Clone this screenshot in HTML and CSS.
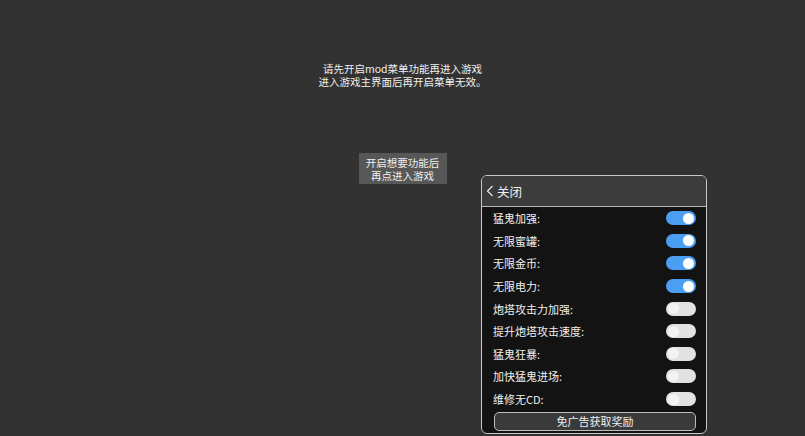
FILE: index.html
```html
<!DOCTYPE html>
<html lang="zh-CN">
<head>
    <meta charset="UTF-8">
    <title>mod菜单</title>
    <link rel="stylesheet" href="styles.css">
</head>
<body>
    <div class="screen">
        <div class="notice">
            <div>请先开启mod菜单功能再进入游戏</div>
            <div>进入游戏主界面后再开启菜单无效。</div>
        </div>

        <div class="enter-btn">
            <div>开启想要功能后</div>
            <div>再点进入游戏</div>
        </div>

        <div class="menu">
            <div class="menu-head">
                <svg class="back" width="8" height="12" viewBox="0 0 8 12">
                    <path d="M6.5 1 L1.5 6 L6.5 11" fill="none" stroke="#e8e8e8" stroke-width="1.2"/>
                </svg>
                <span>关闭</span>
            </div>
            <div class="menu-body">
                <div class="row"><span>猛鬼加强:</span><div class="switch on"></div></div>
                <div class="row"><span>无限蜜罐:</span><div class="switch on"></div></div>
                <div class="row"><span>无限金币:</span><div class="switch on"></div></div>
                <div class="row"><span>无限电力:</span><div class="switch on"></div></div>
                <div class="row"><span>炮塔攻击力加强:</span><div class="switch"></div></div>
                <div class="row"><span>提升炮塔攻击速度:</span><div class="switch"></div></div>
                <div class="row"><span>猛鬼狂暴:</span><div class="switch"></div></div>
                <div class="row"><span>加快猛鬼进场:</span><div class="switch"></div></div>
                <div class="row"><span>维修无CD:</span><div class="switch"></div></div>
                <div class="reward">免广告获取奖励</div>
            </div>
        </div>
    </div>
</body>
</html>
```

FILE: styles.css
```css
body {
    margin: 0;
    background-color: #323232;
    font-family: "Noto Sans CJK SC", "Noto Sans", sans-serif;
    color: #f0f0f0;
}

.screen {
    position: relative;
    width: 805px;
    height: 436px;
    overflow: hidden;
    display: flex;
    flex-direction: column;
    align-items: center;
}

.notice {
    margin-top: 62px;
    font-size: 10.5px;
    line-height: 13px;
    text-align: center;
}

.enter-btn {
    margin-top: 65px;
    width: 88px;
    height: 31px;
    background-color: #575757;
    font-size: 10.5px;
    line-height: 13px;
    text-align: center;
    display: flex;
    flex-direction: column;
    justify-content: center;
}

/* floating menu panel */
.menu {
    position: absolute;
    left: 481px;
    top: 175px;
    width: 224px;
    height: 257px;
    border: 1px solid #c8c8c8;
    border-radius: 6px;
    background-color: #131313;
    overflow: hidden;
}

.menu-head {
    height: 30px;
    background-color: #3c3c3c;
    border-bottom: 1px solid #b8b8b8;
    display: flex;
    align-items: center;
    padding-left: 4px;
    gap: 3px;
    font-size: 12.5px;
}

.menu-body {
    padding: 0 10px 0 11px;
}

.row {
    height: 22.6px;
    display: flex;
    align-items: center;
    justify-content: space-between;
    font-size: 11px;
}

.switch {
    position: relative;
    width: 30px;
    height: 14px;
    border-radius: 7px;
    background-color: #e2e2e2;
}

.switch::after {
    content: "";
    position: absolute;
    top: 1.5px;
    left: 2px;
    width: 11px;
    height: 11px;
    border-radius: 50%;
    background-color: #f3f3f3;
}

.switch.on {
    background-color: #4c9ef3;
}

.switch.on::after {
    left: auto;
    right: 2px;
    background-color: #ffffff;
}

.reward {
    margin-top: 2px;
    margin-left: 1px;
    height: 17px;
    border: 1px solid #bdbdbd;
    border-radius: 5px;
    background-color: #3a3a3a;
    font-size: 11px;
    line-height: 17px;
    text-align: center;
}
```
